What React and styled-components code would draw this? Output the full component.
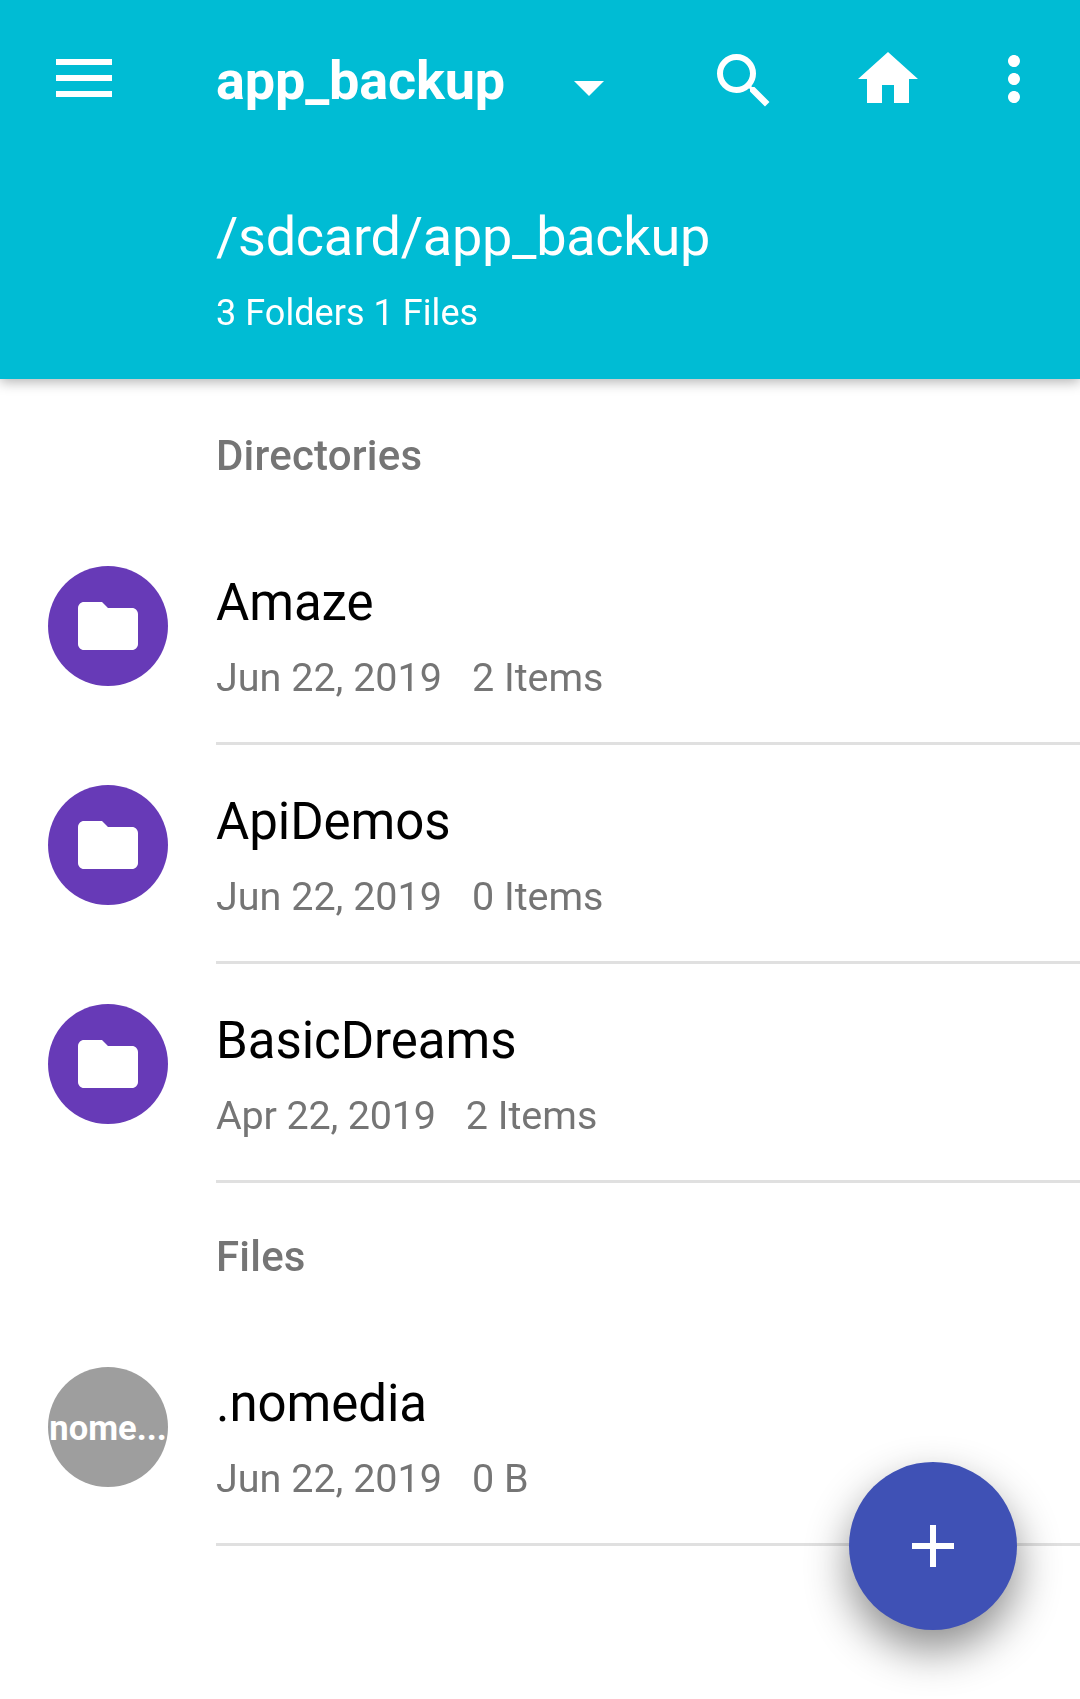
import React from "react";
import styled, { createGlobalStyle, css } from "styled-components";
import { MdSearch, MdHome, MdMoreVert, MdFolder, MdAdd, MdArrowDropDown } from "react-icons/md";

const Global = createGlobalStyle`
  html, body { margin: 0; padding: 0; background: #fff; }
  * { box-sizing: border-box; }
`;

const grayText = css`
  will-change: transform;
`;

const Page = styled.div`
  position: relative;
  width: 1080px;
  height: 1699px;
  overflow: hidden;
  background: #fff;
  font-family: Roboto, "Liberation Sans", sans-serif;
`;

const Header = styled.header`
  position: relative;
  z-index: 1;
  height: 379px;
  padding-top: 43px;
  background: #00bcd4;
  color: #fff;
  box-shadow: 0 3px 12px rgba(0, 0, 0, 0.3);
`;

const Toolbar = styled.div`
  display: flex;
  align-items: flex-start;
  height: 72px;
  padding: 0 30px 0 56px;
`;

const Burger = styled.svg`
  flex: none;
  width: 56px;
  height: 38px;
  margin-right: 104px;
  margin-top: 16px;
  fill: #fff;
`;

const Title = styled.div`
  ${grayText}
  width: 288px;
  font-size: 54px;
  font-weight: 700;
  line-height: 72px;
  letter-spacing: -0.15px;
  white-space: nowrap;
  margin-top: 2px;
`;

const IconSlot = styled.span`
  display: flex;
  flex: none;
  width: 72px;
  height: 72px;
  margin-left: ${(p) => p.$gap}px;
  margin-top: ${(p) => p.$down || 0}px;
  font-size: 72px;
  color: #fff;
`;

const Path = styled.div`
  ${grayText}
  margin: 87px 0 0 216px;
  font-size: 54px;
  line-height: 70px;
  letter-spacing: -0.25px;
  white-space: nowrap;
`;

const Summary = styled.div`
  ${grayText}
  margin: 17px 0 0 216px;
  font-size: 36px;
  line-height: 48px;
  letter-spacing: 0.05px;
  white-space: nowrap;
`;

const SectionLabel = styled.div`
  ${grayText}
  height: ${(p) => p.$h}px;
  padding: ${(p) => p.$top}px 0 0 216px;
  display: flex;
  align-items: center;
  font-size: 42px;
  font-weight: 500;
  letter-spacing: 0.2px;
  color: #757575;
`;

const Row = styled.div`
  display: flex;
  height: 219px;
  padding-left: 48px;
`;

const Avatar = styled.div`
  flex: none;
  width: 120px;
  height: 120px;
  margin-top: 40px;
  border-radius: 50%;
  background: ${(p) => p.$color};
  color: #fff;
  display: flex;
  align-items: center;
  justify-content: center;
  overflow: hidden;
  font-size: 72px;
  font-weight: 700;
`;

const AvatarText = styled.span`
  font-size: 34.5px;
  line-height: 1;
  margin-top: 2px;
  white-space: nowrap;
`;

const RowBody = styled.div`
  flex: 1;
  margin-left: 48px;
  border-bottom: 3px solid #e0e0e0;
`;

const Name = styled.div`
  ${grayText}
  margin-top: 41px;
  font-size: 51px;
  line-height: 72px;
  letter-spacing: -0.05px;
  color: #000;
`;

const Meta = styled.div`
  ${grayText}
  display: flex;
  gap: 30px;
  margin-top: 11px;
  font-size: 39.5px;
  line-height: 56px;
  letter-spacing: -0.02px;
  color: #757575;
`;

const DateText = styled.span`
  letter-spacing: ${(p) => p.$tracking || 0}px;
`;

const Fab = styled.button`
  position: absolute;
  z-index: 2;
  left: 849px;
  top: 1462px;
  width: 168px;
  height: 168px;
  padding: 0;
  border: 0;
  border-radius: 50%;
  background: #3f51b5;
  color: #fff;
  display: flex;
  align-items: center;
  justify-content: center;
  font-size: 72px;
  box-shadow: 0 20px 44px rgba(0, 0, 0, 0.45);
`;

const dirs = [
  { name: "Amaze", date: "Jun 22, 2019", info: "2 Items" },
  { name: "ApiDemos", date: "Jun 22, 2019", info: "0 Items" },
  { name: "BasicDreams", date: "Apr 22, 2019", info: "2 Items", tracking: -0.18 },
];

const FileRow = ({ item, avatar }) => (
  <Row>
    {avatar}
    <RowBody>
      <Name>{item.name}</Name>
      <Meta>
        <DateText $tracking={item.tracking}>{item.date}</DateText>
        <span>{item.info}</span>
      </Meta>
    </RowBody>
  </Row>
);

export default function App() {
  return (
    <Page>
      <Global />
      <Header>
        <Toolbar>
          <Burger viewBox="0 0 56 38">
            <rect x="0" y="0" width="56" height="6" />
            <rect x="0" y="16" width="56" height="6" />
            <rect x="0" y="32" width="56" height="6" />
          </Burger>
          <Title>app_backup</Title>
          <IconSlot $gap={49} $down={8}><MdArrowDropDown /></IconSlot>
          <IconSlot $gap={83} $down={2}><MdSearch /></IconSlot>
          <IconSlot $gap={72}><MdHome /></IconSlot>
          <IconSlot $gap={54}><MdMoreVert /></IconSlot>
        </Toolbar>
        <Path>/sdcard/app_backup</Path>
        <Summary>3 Folders 1 Files</Summary>
      </Header>
      <SectionLabel $h={147} $top={5}>Directories</SectionLabel>
      {dirs.map((d) => (
        <FileRow key={d.name} item={d} avatar={<Avatar $color="#673ab7"><MdFolder /></Avatar>} />
      ))}
      <SectionLabel $h={144} $top={3}>Files</SectionLabel>
      <FileRow
        item={{ name: ".nomedia", date: "Jun 22, 2019", info: "0 B" }}
        avatar={<Avatar $color="#9e9e9e"><AvatarText>nome...</AvatarText></Avatar>}
      />
      <Fab aria-label="Add"><MdAdd /></Fab>
    </Page>
  );
}
